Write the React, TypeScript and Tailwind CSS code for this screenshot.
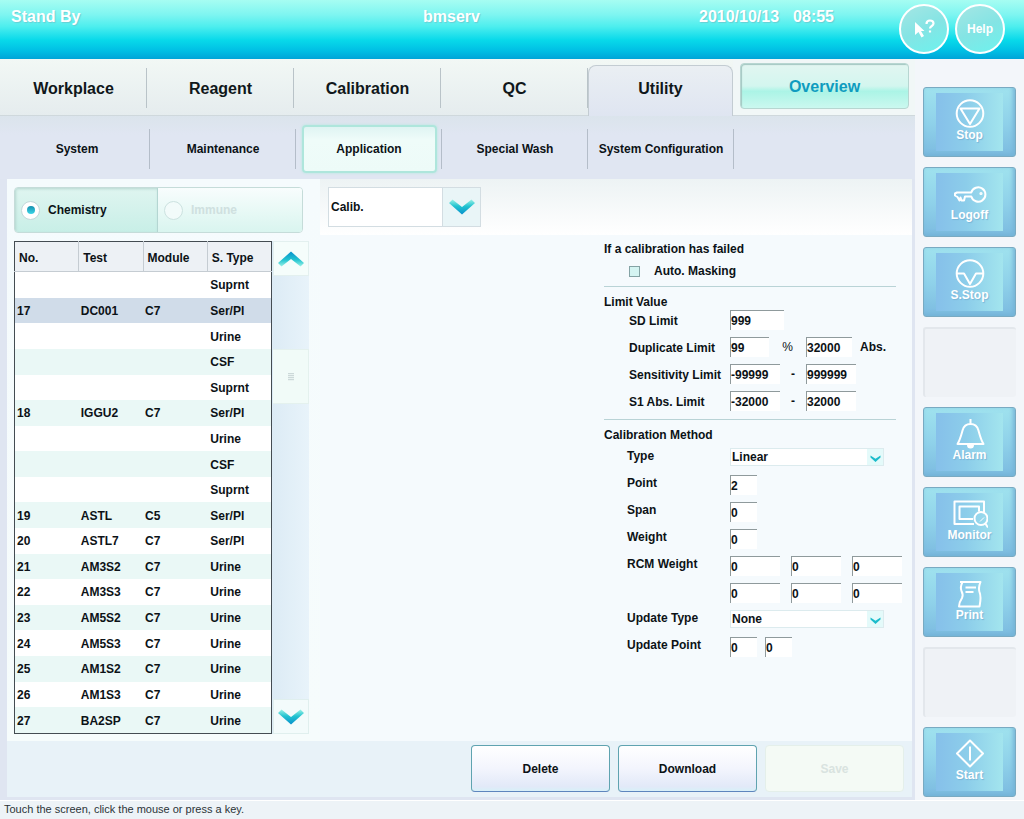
import React, { useState } from "react";

type SideItem = { label: string; icon: React.ReactNode } | null;

const stroke = {
  fill: "none",
  stroke: "white",
  strokeWidth: 2,
  strokeLinejoin: "round" as const,
};

const sideItems: SideItem[] = [
  {
    label: "Stop",
    icon: (
      <svg viewBox="0 0 36 30" className="h-[30px] w-9" {...stroke}>
        <circle cx="18" cy="14.5" r="13.3" />
        <path d="M8.5 9.5H27.5L18 25Z" />
      </svg>
    ),
  },
  {
    label: "Logoff",
    icon: (
      <svg viewBox="0 0 36 30" className="h-[30px] w-9" {...stroke}>
        <path d="M19.3 13.5A7.200 7.200 0 1 1 19.3 17.500H13L12 21.500H9.500L8.500 18.500L7.500 21.500L5.500 18L3 16.500V14.500L5 13.500Z" />
        <circle cx="29" cy="14.500" r="0.6" fill="white" />
      </svg>
    ),
  },
  {
    label: "S.Stop",
    icon: (
      <svg viewBox="0 0 36 30" className="h-[30px] w-9" {...stroke}>
        <circle cx="18" cy="14.5" r="13.3" />
        <path d="M5 14.500H12L18 25L24 14.500H31" />
      </svg>
    ),
  },
  null,
  {
    label: "Alarm",
    icon: (
      <svg viewBox="0 0 36 30" className="h-[30px] w-9" {...stroke}>
        <path d="M18.500 0V5M5.500 25H31.500C29 21 28 17 26.500 11.500C25.500 7.500 22.500 5 18.500 5C14.500 5 11.500 7.500 10.500 11.500C9 17 8 21 5.500 25Z" />
        <path d="M16 26H21C21 28 20 28.500 18.500 28.500C17 28.500 16 28 16 26Z" fill="white" />
      </svg>
    ),
  },
  {
    label: "Monitor",
    icon: (
      <svg viewBox="0 0 36 30" className="h-[30px] w-9" {...stroke}>
        <path d="M22 25H2.500V2.500H32V13" />
        <path d="M21 20H7.500V7.500H27V12.500" />
        <circle cx="29" cy="19.500" r="6.500" />
        <path d="M33 24L36 28.500" />
        <path d="M28 22.500L32 18.500" strokeWidth="1" />
      </svg>
    ),
  },
  {
    label: "Print",
    icon: (
      <svg viewBox="0 0 36 30" className="h-[30px] w-9" {...stroke}>
        <path d="M8 3H28.500C26.500 8 26.500 10 27.500 13C29.500 18 28.500 22 27.500 27.500H7C7 24 8 22 10 19C11.500 16 10.500 14 9.500 12C8 8.500 9 6 10.500 3" />
        <path d="M13.500 8.500H24M13.500 13H21.500" />
      </svg>
    ),
  },
  null,
  {
    label: "Start",
    icon: (
      <svg viewBox="0 0 36 30" className="h-[30px] w-9" {...stroke}>
        <path d="M18 1.500L31 14.500L18 27.500L5 14.500Z" />
        <path d="M18 7.500V21.500" />
      </svg>
    ),
  },
];

const rows: [string, string, string, string][] = [
  ["", "", "", "Suprnt"],
  ["17", "DC001", "C7", "Ser/Pl"],
  ["", "", "", "Urine"],
  ["", "", "", "CSF"],
  ["", "", "", "Suprnt"],
  ["18", "IGGU2", "C7", "Ser/Pl"],
  ["", "", "", "Urine"],
  ["", "", "", "CSF"],
  ["", "", "", "Suprnt"],
  ["19", "ASTL", "C5", "Ser/Pl"],
  ["20", "ASTL7", "C7", "Ser/Pl"],
  ["21", "AM3S2", "C7", "Urine"],
  ["22", "AM3S3", "C7", "Urine"],
  ["23", "AM5S2", "C7", "Urine"],
  ["24", "AM5S3", "C7", "Urine"],
  ["25", "AM1S2", "C7", "Urine"],
  ["26", "AM1S3", "C7", "Urine"],
  ["27", "BA2SP", "C7", "Urine"],
];

function Chevron({ up = false }: { up?: boolean }) {
  const id = up ? "chevron-up" : "chevron-down";
  return (
    <svg viewBox="0 0 26 16" className="h-4 w-[26px]">
      <defs>
        <linearGradient id={id} x1="0" y1={up ? "1" : "0"} x2="0" y2={up ? "0" : "1"}>
          <stop offset="0" stopColor="#9af2e6" />
          <stop offset="0.45" stopColor="#22c3d0" />
          <stop offset="1" stopColor="#0890cc" />
        </linearGradient>
      </defs>
      <path
        d={up ? "M13 0.500L26 12L22.500 15.500L13 8L3.500 15.500L0 12Z" : "M13 15.500L26 4L22.500 0.500L13 8L3.500 0.500L0 4Z"}
        fill={`url(#${id})`}
      />
    </svg>
  );
}

function SmallSelect({ id, value }: { id: string; value: string }) {
  return (
    <div className="relative h-[18px] w-[154px]">
      <select
        id={id}
        defaultValue={value}
        className="h-full w-full appearance-none rounded-none border border-[#dcebee] bg-white pl-px text-xs font-bold leading-4"
      >
        <option>{value}</option>
      </select>
      <span className="pointer-events-none absolute inset-y-px right-px flex w-4 items-center justify-center bg-[#e4fafa]">
        <svg viewBox="0 0 11 7" className="mt-0.5 h-[7px] w-[11px]">
          <path d="M0.500 0.500L5.500 3.800L10.500 0.500V2.500L5.500 7L0.500 2.500Z" fill="#1cbccb" />
        </svg>
      </span>
    </div>
  );
}

function Field({ id, label, value, className }: { id?: string; label?: string; value: string; className: string }) {
  return (
    <input
      id={id}
      aria-label={label}
      defaultValue={value}
      className={`h-5 border-l border-t border-[#8f9a9c] bg-white text-xs font-bold outline-none ${className}`}
    />
  );
}

function Row({
  htmlFor,
  label,
  low = false,
  children,
}: {
  htmlFor?: string;
  label: string;
  low?: boolean;
  children: React.ReactNode;
}) {
  return (
    <div className="flex h-[27px] items-start">
      <label htmlFor={htmlFor} className={low ? "w-[101px] shrink-0 pt-[3px] leading-4" : "w-[103px] shrink-0 leading-4"}>
        {label}
      </label>
      {children}
    </div>
  );
}

const mainTabs = ["Workplace", "Reagent", "Calibration", "QC"];
const subTabs = ["System", "Maintenance", "Application", "Special Wash", "System Configuration"];

export default function App() {
  const [masking, setMasking] = useState(false);
  const [selected, setSelected] = useState(1);

  return (
    <div className="flex min-h-screen flex-col bg-[#f3f6fa] font-['Liberation_Sans',Arial,sans-serif] text-xs font-bold text-[#0c1216]">
      <header className="flex h-[59px] items-start bg-[linear-gradient(to_bottom,#a6fdf2_0%,#7ef5f1_25%,#4deeee_45%,#08d9ea_68%,#00bfe4_86%,#00a4d8_100%)] text-base leading-5 text-white">
        <div className="w-[423px] pl-[11px] pt-[7px] [text-shadow:1px_1px_1px_#66cfd4]">Stand By</div>
        <div className="flex-1 pt-[7px] [text-shadow:1px_1px_1px_#66cfd4]">bmserv</div>
        <div className="flex w-[200px] gap-3.5 pt-[7px] [text-shadow:1px_1px_1px_#66cfd4]">
          <span>2010/10/13</span>
          <span>08:55</span>
        </div>
        <div className="flex w-[125px] gap-1.5 pt-1">
          <button
            aria-label="Context help"
            className="flex size-[50px] items-center justify-center rounded-full border-2 border-white bg-[linear-gradient(155deg,#a5e6e4,#84e4e4_50%,#6cf3ee)]"
          >
            <svg viewBox="0 0 24 20" className="h-5 w-6">
              <path d="M3 3V16L6.500 13L9.500 18.500L12 17L9 12H12.500Z" fill="white" />
              <path d="M14.500 5C14.500 2.500 16 1.500 18 1.500C20 1.500 21.500 2.700 21.500 4.500C21.500 7 18 7 18 9.500M18 11.500V13.500" fill="none" stroke="white" strokeWidth="2.200" />
            </svg>
          </button>
          <button className="size-[50px] rounded-full border-2 border-white bg-[linear-gradient(155deg,#a5e6e4,#84e4e4_50%,#6cf3ee)] text-xs">
            Help
          </button>
        </div>
      </header>

      <div className="flex flex-1">
        <main className="flex min-w-0 flex-1 flex-col bg-[#dfe5f1]">
          <nav className="flex h-[57px] items-end bg-[linear-gradient(to_bottom,#f2f8f5,#e5ecee)] text-base text-[#10171a] shadow-[inset_0_-1px_0_#cfd8dc]">
            <div className="flex w-[588px]">
              {mainTabs.map((tab) => (
                <button
                  key={tab}
                  className="relative h-14 flex-1 pt-0.5 after:absolute after:bottom-2 after:right-0 after:top-2 after:w-px after:bg-[#b9c3c8]"
                >
                  {tab}
                </button>
              ))}
            </div>
            <button className="h-[51px] w-[145px] rounded-t-lg border-x border-t border-[#c3ccd2] bg-[linear-gradient(to_bottom,#eaeff3,#dfe5f1)] pb-1">
              Utility
            </button>
            <div className="h-full flex-1 bg-[#f1f7f7] pl-[7px] pr-1.5 pt-1 shadow-[inset_0_-1px_0_#cfd8dc]">
              <button className="h-[46px] w-full rounded-sm border border-[#b7d6d1] bg-[linear-gradient(to_bottom,#e2f6f1_0%,#d3f6ef_50%,#abf4e6_62%,#cbf8ef_100%)] pt-0.5 text-[#0f9cbf] shadow-[inset_1px_1px_1px_#a3c7c1]">
                Overview
              </button>
            </div>
          </nav>

          <nav className="flex h-[63px] items-center bg-[linear-gradient(to_bottom,#dbe4ec,#e0e6f2_30%)] pl-1 pt-0.5">
            {subTabs.map((tab) => (
              <div key={tab} className="relative flex h-12 w-[146px] items-center justify-center after:absolute after:inset-y-1 after:right-0 after:w-px after:bg-[#b4bdc9]">
                {tab === "Application" ? (
                  <button className="h-12 w-[135px] rounded border-2 border-[#aee6dc] bg-[linear-gradient(to_bottom,#dff4f3,#effcf9_30%,#edfbf8)] shadow-[0_0_3px_#b4e8df]">
                    {tab}
                  </button>
                ) : (
                  <button className="h-12 w-full">{tab}</button>
                )}
              </div>
            ))}
          </nav>

          <div className="ml-[7px] mr-[3px] flex flex-1 flex-col">
            <div className="flex h-[562px] bg-[#f5fafd]">
              <section className="w-[313px] bg-[linear-gradient(to_bottom,#f5fbfd,#f6fcfc)] pl-[7px] pt-2">
                <div className="flex h-[46px] w-[289px] overflow-hidden rounded border border-[#c5dcd9] bg-white">
                  <label className="flex h-full w-[143px] items-center gap-2 border-r border-[#b4d6d2] bg-[linear-gradient(to_bottom,#dff5f0,#c8efe7)] pl-1.5 shadow-[inset_1px_1px_3px_#b5d6d0]">
                    <span className="flex size-[19px] items-center justify-center rounded-full border border-[#c3d8da] bg-white">
                      <input type="radio" name="kind" defaultChecked className="size-2 appearance-none rounded-full bg-[linear-gradient(to_bottom,#168fae,#3bd6e8)]" />
                    </span>
                    Chemistry
                  </label>
                  <label className="flex h-full flex-1 items-center gap-2 bg-[linear-gradient(to_bottom,#f8fdfd,#d9f5ef)] pl-1.5 text-[#cfe0df]">
                    <input type="radio" name="kind" disabled className="size-[19px] appearance-none rounded-full border border-[#cce2e0] bg-[#f2fbfa]" />
                    Immune
                  </label>
                </div>

                <div className="mt-2 flex">
                  <table className="h-[493px] w-[258px] table-fixed border-collapse border border-[#444c52] bg-white text-left">
                    <thead>
                      <tr className="h-[30px] bg-[#edf1f5]">
                        {["No.", "Test", "Module", "S. Type"].map((h) => (
                          <th key={h} className="border-b border-r border-[#c5ccd2] p-0 pl-1 pt-0.5 font-bold last:border-r-[#444c52]">
                            {h}
                          </th>
                        ))}
                      </tr>
                    </thead>
                    <tbody>
                      {rows.map((r, i) => (
                        <tr
                          key={i}
                          onClick={() => setSelected(i)}
                          className={i === selected ? "bg-[#d0dce9]" : i % 2 ? "bg-[#eaf8f6]" : "bg-white"}
                        >
                          <td className="p-0 pl-0.5 pt-px">{r[0]}</td>
                          <td className="p-0 pl-0.5 pt-px">{r[1]}</td>
                          <td className="p-0 pl-0.5 pt-px">{r[2]}</td>
                          <td className="p-0 pl-[3px] pt-px">{r[3]}</td>
                        </tr>
                      ))}
                    </tbody>
                  </table>
                  <div className="flex w-[37px] flex-col bg-[linear-gradient(to_right,#dcebf5,#e8f3fa)] pl-px">
                    <button aria-label="Scroll up" className="flex h-[35px] items-center justify-center border border-[#e3f0ef] bg-[#f5fdfb]">
                      <Chevron up />
                    </button>
                    <div className="mt-[73px] flex h-[55px] items-center justify-center border-y border-r border-[#e4f1ee] bg-[#f1fbf8]">
                      <div className="h-2 w-1.5 bg-[repeating-linear-gradient(to_bottom,#ccd9d9_0_1px,#e9f3f1_1px_2px)]" />
                    </div>
                    <button aria-label="Scroll down" className="mt-auto flex h-[35px] items-center justify-center border border-[#e0efee] bg-[#f3fbfb]">
                      <Chevron />
                    </button>
                  </div>
                </div>
              </section>

              <section className="flex flex-1 flex-col">
                <div className="h-14 bg-[linear-gradient(to_bottom,#edf3f4,#ffffff)] pl-2 pt-2">
                  <div className="relative h-10 w-[153px]">
                    <select aria-label="Settings page" defaultValue="Calib." className="h-full w-full appearance-none rounded-none border border-[#d3dde2] bg-white pl-0.5 text-xs font-bold">
                      <option>Calib.</option>
                    </select>
                    <span className="pointer-events-none absolute inset-y-px right-px flex w-[38px] items-center justify-center border-l border-[#d3dde2] bg-[#e9f5f7]">
                      <Chevron />
                    </span>
                  </div>
                </div>

                <form className="ml-auto w-[308px] pt-1.5 leading-4" onSubmit={(e) => e.preventDefault()}>
                  <h2>If a calibration has failed</h2>
                  <label className="mt-1.5 flex items-center gap-3.5 pl-[25px]">
                    <input
                      type="checkbox"
                      checked={masking}
                      onChange={(e) => setMasking(e.target.checked)}
                      className="size-[11px] appearance-none border border-[#84a3a5] bg-[#d4f4f2] checked:bg-[#1cbccb]"
                    />
                    Auto. Masking
                  </label>
                  <hr className="mr-4 mt-[7px] border-[#b9d3d6]" />

                  <h2 className="mt-[7px]">Limit Value</h2>
                  <div className="pl-[25px]">
                    <Row low htmlFor="sd" label="SD Limit">
                      <Field id="sd" value="999" className="w-[54px]" />
                    </Row>
                    <Row low htmlFor="dup" label="Duplicate Limit">
                      <Field id="dup" value="99" className="w-[39px]" />
                      <span className="w-[37px] pt-0.5 text-center font-normal">%</span>
                      <Field label="Duplicate limit, absorbance" value="32000" className="w-[46px]" />
                      <span className="pl-2 pt-0.5">Abs.</span>
                    </Row>
                    <Row low htmlFor="sens" label="Sensitivity Limit">
                      <Field id="sens" value="-99999" className="w-[50px]" />
                      <span className="w-[26px] pt-0.5 text-center">-</span>
                      <Field label="Sensitivity limit, upper" value="999999" className="w-[50px]" />
                    </Row>
                    <Row low htmlFor="s1" label="S1 Abs. Limit">
                      <Field id="s1" value="-32000" className="w-[50px]" />
                      <span className="w-[26px] pt-0.5 text-center">-</span>
                      <Field label="S1 absorbance limit, upper" value="32000" className="w-[50px]" />
                    </Row>
                  </div>
                  <hr className="mr-4 mt-px border-[#b9d3d6]" />

                  <h2 className="mt-[7px]">Calibration Method</h2>
                  <div className="mt-[5px] pl-[23px]">
                    <Row htmlFor="type" label="Type">
                      <SmallSelect id="type" value="Linear" />
                    </Row>
                    <Row htmlFor="point" label="Point">
                      <Field id="point" value="2" className="w-[27px]" />
                    </Row>
                    <Row htmlFor="span" label="Span">
                      <Field id="span" value="0" className="w-[27px]" />
                    </Row>
                    <Row htmlFor="weight" label="Weight">
                      <Field id="weight" value="0" className="w-[27px]" />
                    </Row>
                    <Row htmlFor="rcm" label="RCM Weight">
                      <div className="flex gap-[11px]">
                        <Field id="rcm" value="0" className="w-[50px]" />
                        <Field label="RCM weight 2" value="0" className="w-[50px]" />
                        <Field label="RCM weight 3" value="0" className="w-[50px]" />
                      </div>
                    </Row>
                    <Row label="">
                      <div className="flex gap-[11px]">
                        <Field label="RCM weight 4" value="0" className="w-[50px]" />
                        <Field label="RCM weight 5" value="0" className="w-[50px]" />
                        <Field label="RCM weight 6" value="0" className="w-[50px]" />
                      </div>
                    </Row>
                    <Row htmlFor="utype" label="Update Type">
                      <SmallSelect id="utype" value="None" />
                    </Row>
                    <Row htmlFor="upoint" label="Update Point">
                      <div className="flex gap-2">
                        <Field id="upoint" value="0" className="w-[27px]" />
                        <Field label="Update point 2" value="0" className="w-[27px]" />
                      </div>
                    </Row>
                  </div>
                </form>
              </section>
            </div>

            <div className="flex flex-1 items-start justify-end gap-2 bg-[#e8f2f8] pr-2 pt-1">
              <button className="h-[47px] w-[139px] rounded-sm border border-[#5fa3b0] border-b-[#5e86bd] bg-[linear-gradient(to_bottom,#ffffff,#f3f5fd_50%,#e2e9f8_90%,#d8f0f8)]">
                Delete
              </button>
              <button className="h-[47px] w-[139px] rounded-sm border border-[#5fa3b0] border-b-[#5e86bd] bg-[linear-gradient(to_bottom,#ffffff,#f3f5fd_50%,#e2e9f8_90%,#d8f0f8)]">
                Download
              </button>
              <button disabled className="h-[47px] w-[139px] rounded-sm border border-[#e4efea] bg-[#f4faf5] text-[#d9e3e0]">
                Save
              </button>
            </div>
            <div className="h-[3px]" />
          </div>
        </main>

        <aside className="flex w-[109px] flex-col gap-2.5 pl-2 pt-7">
          {sideItems.map((item, i) =>
            item ? (
              <button
                key={item.label}
                className="h-[70px] w-[93px] rounded-[3px] border border-[#79aac2] bg-[linear-gradient(to_bottom,#9fe2ee,#90d2ea_50%,#7cbbe0)] px-3 py-[5px] text-white shadow-[inset_-2px_-2px_4px_#74b3d6]"
              >
                <span className="flex h-full flex-col items-center bg-[linear-gradient(to_right,#86c0ea,#8ccdea_45%,#a3e5ee)] pt-1.5 leading-[13px] [text-shadow:1px_1px_1px_#79b5d6]">
                  {item.icon}
                  {item.label}
                </span>
              </button>
            ) : (
              <div key={i} className="h-[70px] w-[93px] rounded-[3px] border-l-2 border-t-2 border-[#e3e7ec] bg-[#eff2f6]" />
            ),
          )}
        </aside>
      </div>

      <footer className="h-[19px] border-t border-white bg-[#edf3f7] pl-1 text-[11px] font-normal leading-4 text-[#2b3338]">
        Touch the screen, click the mouse or press a key.
      </footer>
    </div>
  );
}
